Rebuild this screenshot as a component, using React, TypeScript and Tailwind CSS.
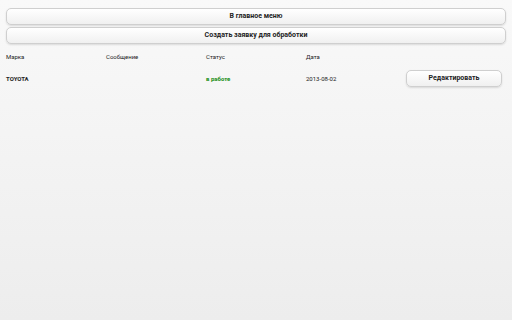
export default function App() {
  const btn =
    "h-[17px] rounded-[5px] border border-[#cfcfcf] bg-gradient-to-b from-white to-[#f0f0f0] shadow-[0_1px_2px_rgba(0,0,0,0.12)] text-[7px] font-bold text-[#222] flex items-center justify-center";

  return (
    <div
      className="w-[512px] h-[320px] bg-gradient-to-b from-[#f9f9f9] to-[#ededed] overflow-hidden"
      style={{ fontFamily: "Roboto, 'Liberation Sans', sans-serif" }}
    >
      <div className="flex flex-col gap-[2px] px-[6px] pt-[8px]">
        <button className={`w-full ${btn}`}>В главное меню</button>
        <button className={`w-full ${btn}`}>Создать заявку для обработки</button>
      </div>

      {/* Table */}
      <div className="grid grid-cols-[100px_100px_100px_100px_1fr] px-[6px] mt-[8px] text-[6px] text-[#222]">
        <div className="h-[8px] flex items-center">Марка</div>
        <div className="h-[8px] flex items-center">Сообщение</div>
        <div className="h-[8px] flex items-center">Статус</div>
        <div className="h-[8px] flex items-center">Дата</div>
        <div />

        <div className="h-[36px] flex items-center font-bold">TOYOTA</div>
        <div className="h-[36px]" />
        <div className="h-[36px] flex items-center font-bold text-[#128c12]">в работе</div>
        <div className="h-[36px] flex items-center">2013-08-02</div>
        <div className="h-[36px] flex items-center pr-[4px]">
          <button className={`w-[96px] ${btn}`}>Редактировать</button>
        </div>
      </div>
    </div>
  );
}
